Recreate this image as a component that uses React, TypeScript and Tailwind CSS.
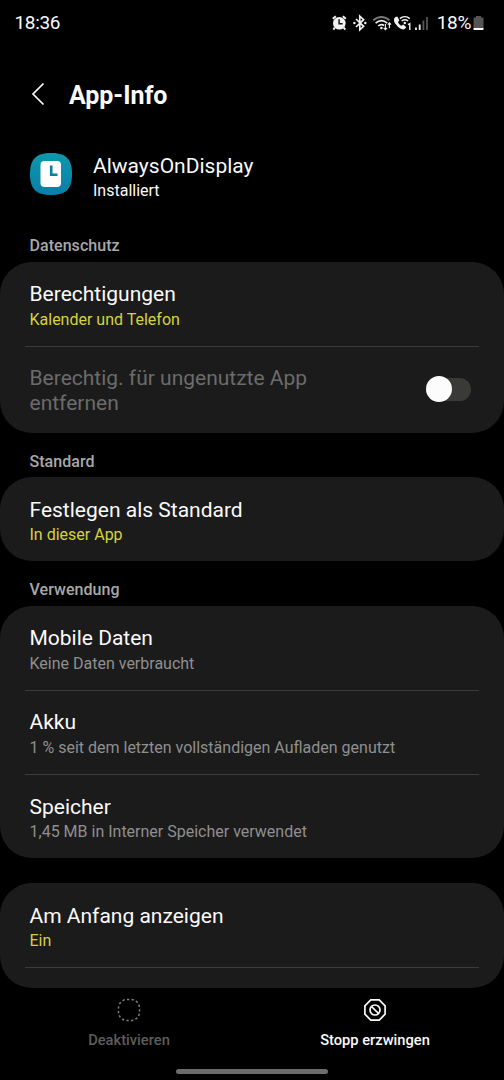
import React from 'react';

function StatusIcons() {
  return (
    <svg width="100" height="20" viewBox="0 0 100 20" fill="none" className="shrink-0">
      {/* alarm */}
      <circle cx="8.3" cy="10.3" r="6.3" fill="#f2f2f2" />
      <path d="M1.8 5.8 4.8 3.2M14.8 5.8 11.8 3.2M3.8 14.6l-1.4 2M12.8 14.6l1.4 2" stroke="#f2f2f2" strokeWidth="2" />
      <path d="M8.1 6.3v4.5h3.6" stroke="#151515" strokeWidth="1.5" />
      {/* bluetooth */}
      <path d="M25 6 32.6 13.3 28.8 16.8V3.2L32.6 6.7 25 14" stroke="#f2f2f2" strokeWidth="1.7" />
      <circle cx="23.4" cy="10" r="1.2" fill="#f2f2f2" />
      <circle cx="34.3" cy="10" r="1.2" fill="#f2f2f2" />
      {/* wifi */}
      <path d="M42.3 7.3c5-4.4 11.4-4.4 16.2 0" stroke="#777" strokeWidth="1.8" />
      <path d="M44.6 10.1c3.6-3 8-3 11.6 0M47.2 12.9c2.2-1.7 4.2-1.7 5.8-.4" stroke="#f2f2f2" strokeWidth="1.7" />
      <circle cx="50.4" cy="15" r="1.3" fill="#f2f2f2" />
      <path d="M54.4 11v5.6m-1.7-1.8 1.7 1.9 1.7-1.9M58.4 15.3V9.8m-1.6 1.9 1.6-1.9 1.6 1.9" stroke="#f2f2f2" strokeWidth="1.1" />
      {/* wifi calling */}
      <path d="M64.6 4c-2.2 1.5-2.2 4.3.4 7.6s5.8 5.6 8.6 4.5l1.7-1.9-3-2.6-1.9 1.2c-1.4-.7-2.9-2.4-3.4-3.9l1.3-1.5L66.4 3.6z" fill="#f2f2f2" />
      <path d="M68.8 5.6c3-2.4 7.2-2.4 10 0M70.6 8c2-1.5 4.5-1.5 6.5 0" stroke="#f2f2f2" strokeWidth="1.5" />
      <circle cx="73.8" cy="10" r="1.2" fill="#f2f2f2" />
      <path d="M77 11.7 78.8 10.7V17" stroke="#f2f2f2" strokeWidth="1.4" />
      {/* signal */}
      <path d="M85 14.5V17M88.7 11.5V17" stroke="#f2f2f2" strokeWidth="1.8" />
      <path d="M92.4 7.5V17M96 4v13" stroke="#555" strokeWidth="1.8" />
    </svg>
  );
}

function StatusBar() {
  return (
    <div className="flex h-[46px] items-center pl-[14.5px] pr-5">
      <span className="text-[19px] leading-5 tracking-[-0.35px]">18:36</span>
      <div className="ml-auto flex items-center">
        <StatusIcons />
        <span className="ml-[6px] mr-[2px] text-[19px] leading-5 tracking-[-0.3px]">18%</span>
        <svg width="11" height="16" viewBox="0 0 11 16">
          <path d="M3 1h5v1.5h1.5q1 0 1 1V14q0 1-1 1h-8q-1 0-1-1V3.5q0-1 1-1H3z" fill="#555" />
          <path d="M.5 13h10V14q0 1-1 1h-8q-1 0-1-1z" fill="#fff" />
        </svg>
      </div>
    </div>
  );
}

function SectionTitle({ children }: { children: React.ReactNode }) {
  return <h2 className="h-[44.5px] pl-[29.5px] pt-[19px] text-[16px] font-medium leading-5 tracking-[0.05px] text-[#a8a8a8]">{children}</h2>;
}

function Card({ children, className = '' }: { children: React.ReactNode; className?: string }) {
  return <section className={`shrink-0 overflow-hidden rounded-[32px] bg-[#1b1b1b] ${className}`}>{children}</section>;
}

function Divider() {
  return <div className="mx-[25px] -mb-px h-px bg-[#3b3b3b]" />;
}

type RowProps = {
  title: string;
  value: string;
  accent?: boolean;
};

function Row({ title, value, accent }: RowProps) {
  return (
    <div className="h-[84.2px] pl-[29.5px] pt-[20.7px]">
      <div className="text-[21px] leading-[25px] text-[#fafafa]">{title}</div>
      <div className={`mt-[0.6px] text-[16px] leading-6 ${accent ? 'text-[#d5d33c]' : 'text-[#8f8f8f]'}`}>{value}</div>
    </div>
  );
}

export default function App() {
  return (
    <main className="flex h-[1080px] w-[504px] flex-col overflow-hidden bg-black font-['Roboto',sans-serif] text-[#fafafa]">
      <StatusBar />

      <header className="flex h-[98px] items-center pl-[31px]">
        <svg width="14" height="24" viewBox="0 0 14 24" fill="none" className="-mt-[3px]">
          <path d="M12.5 1.5 2 12l10.500 10.500" stroke="#fafafa" strokeWidth="1.7" />
        </svg>
        <h1 className="ml-6 mt-px text-[25px] font-bold leading-8 tracking-[-0.05px]">App-Info</h1>
      </header>

      <div className="flex h-[73px] pl-[30px] pt-[9px]">
        <svg width="42" height="42" viewBox="0 0 42 42">
          <defs>
            <linearGradient id="tile" x1="0" y1="0" x2="0" y2="1">
              <stop offset="0" stopColor="#0e98aa" />
              <stop offset="1" stopColor="#087fa9" />
            </linearGradient>
          </defs>
          <path d="M21 0C36 0 42 6 42 21S36 42 21 42 0 36 0 21 6 0 21 0z" fill="url(#tile)" />
          <rect x="10.5" y="8" width="20.5" height="26" rx="4" fill="#fff" />
          <path d="M21.2 12.5v9.3h6.3" fill="none" stroke="#087e9c" strokeWidth="2.6" />
        </svg>
        <div className="ml-[21px] pt-px">
          <div className="text-[21px] leading-[25px]">AlwaysOnDisplay</div>
          <div className="text-[16px] leading-6">Installiert</div>
        </div>
      </div>

      <SectionTitle>Datenschutz</SectionTitle>
      <Card className="h-[171px]">
        <Row title="Berechtigungen" value="Kalender und Telefon" accent />
        <Divider />
        <div className="flex h-[87px] items-center justify-between pl-[29.5px] pr-[33px]">
          <div className="w-[300px] pt-[4px] text-[21px] leading-[25px] text-[#6b6b6b]">Berechtig. für ungenutzte App entfernen</div>
          <div className="flex h-[23px] w-[45px] items-center rounded-full bg-[#3a3a38]">
            <div className="size-[26px] shrink-0 rounded-full bg-[#fcfcfc]" />
          </div>
        </div>
      </Card>

      <SectionTitle>Standard</SectionTitle>
      <Card className="h-[84px]">
        <Row title="Festlegen als Standard" value="In dieser App" accent />
      </Card>

      <SectionTitle>Verwendung</SectionTitle>
      <Card className="h-[252.5px]">
        <Row title="Mobile Daten" value="Keine Daten verbraucht" />
        <Divider />
        <Row title="Akku" value="1 % seit dem letzten vollständigen Aufladen genutzt" />
        <Divider />
        <Row title="Speicher" value="1,45 MB in Interner Speicher verwendet" />
      </Card>

      <Card className="mt-[25px] h-[105px]">
        <Row title="Am Anfang anzeigen" value="Ein" accent />
        <Divider />
      </Card>

      <footer className="flex flex-1 flex-col items-center">
        <div className="flex w-full flex-1 px-[6px] pt-[10px] text-[14.7px] font-medium leading-5">
          <div className="flex flex-1 flex-col items-center text-[#5d5d5d]">
            <svg width="24" height="24" viewBox="0 0 24 24" fill="none">
              <rect x="1.5" y="1.5" width="21" height="21" rx="8.5" stroke="#808080" strokeWidth="1.5" strokeDasharray="2.3 2.3" />
            </svg>
            <span className="mt-2">Deaktivieren</span>
          </div>
          <div className="flex flex-1 flex-col items-center">
            <svg width="24" height="24" viewBox="0 0 24 24" fill="none" stroke="#fafafa" strokeWidth="1.7">
              <path d="M7.8 1.9h8.4l5.9 5.9v8.4l-5.9 5.9H7.8l-5.9-5.9V7.8z" />
              <circle cx="12" cy="12" r="5" />
              <path d="m8.5 8.5 7 7" />
            </svg>
            <span className="mt-2">Stopp erzwingen</span>
          </div>
        </div>
        <div className="mb-[6px] h-[5px] w-[152px] rounded-full bg-[#6c6c6c]" />
      </footer>
    </main>
  );
}
